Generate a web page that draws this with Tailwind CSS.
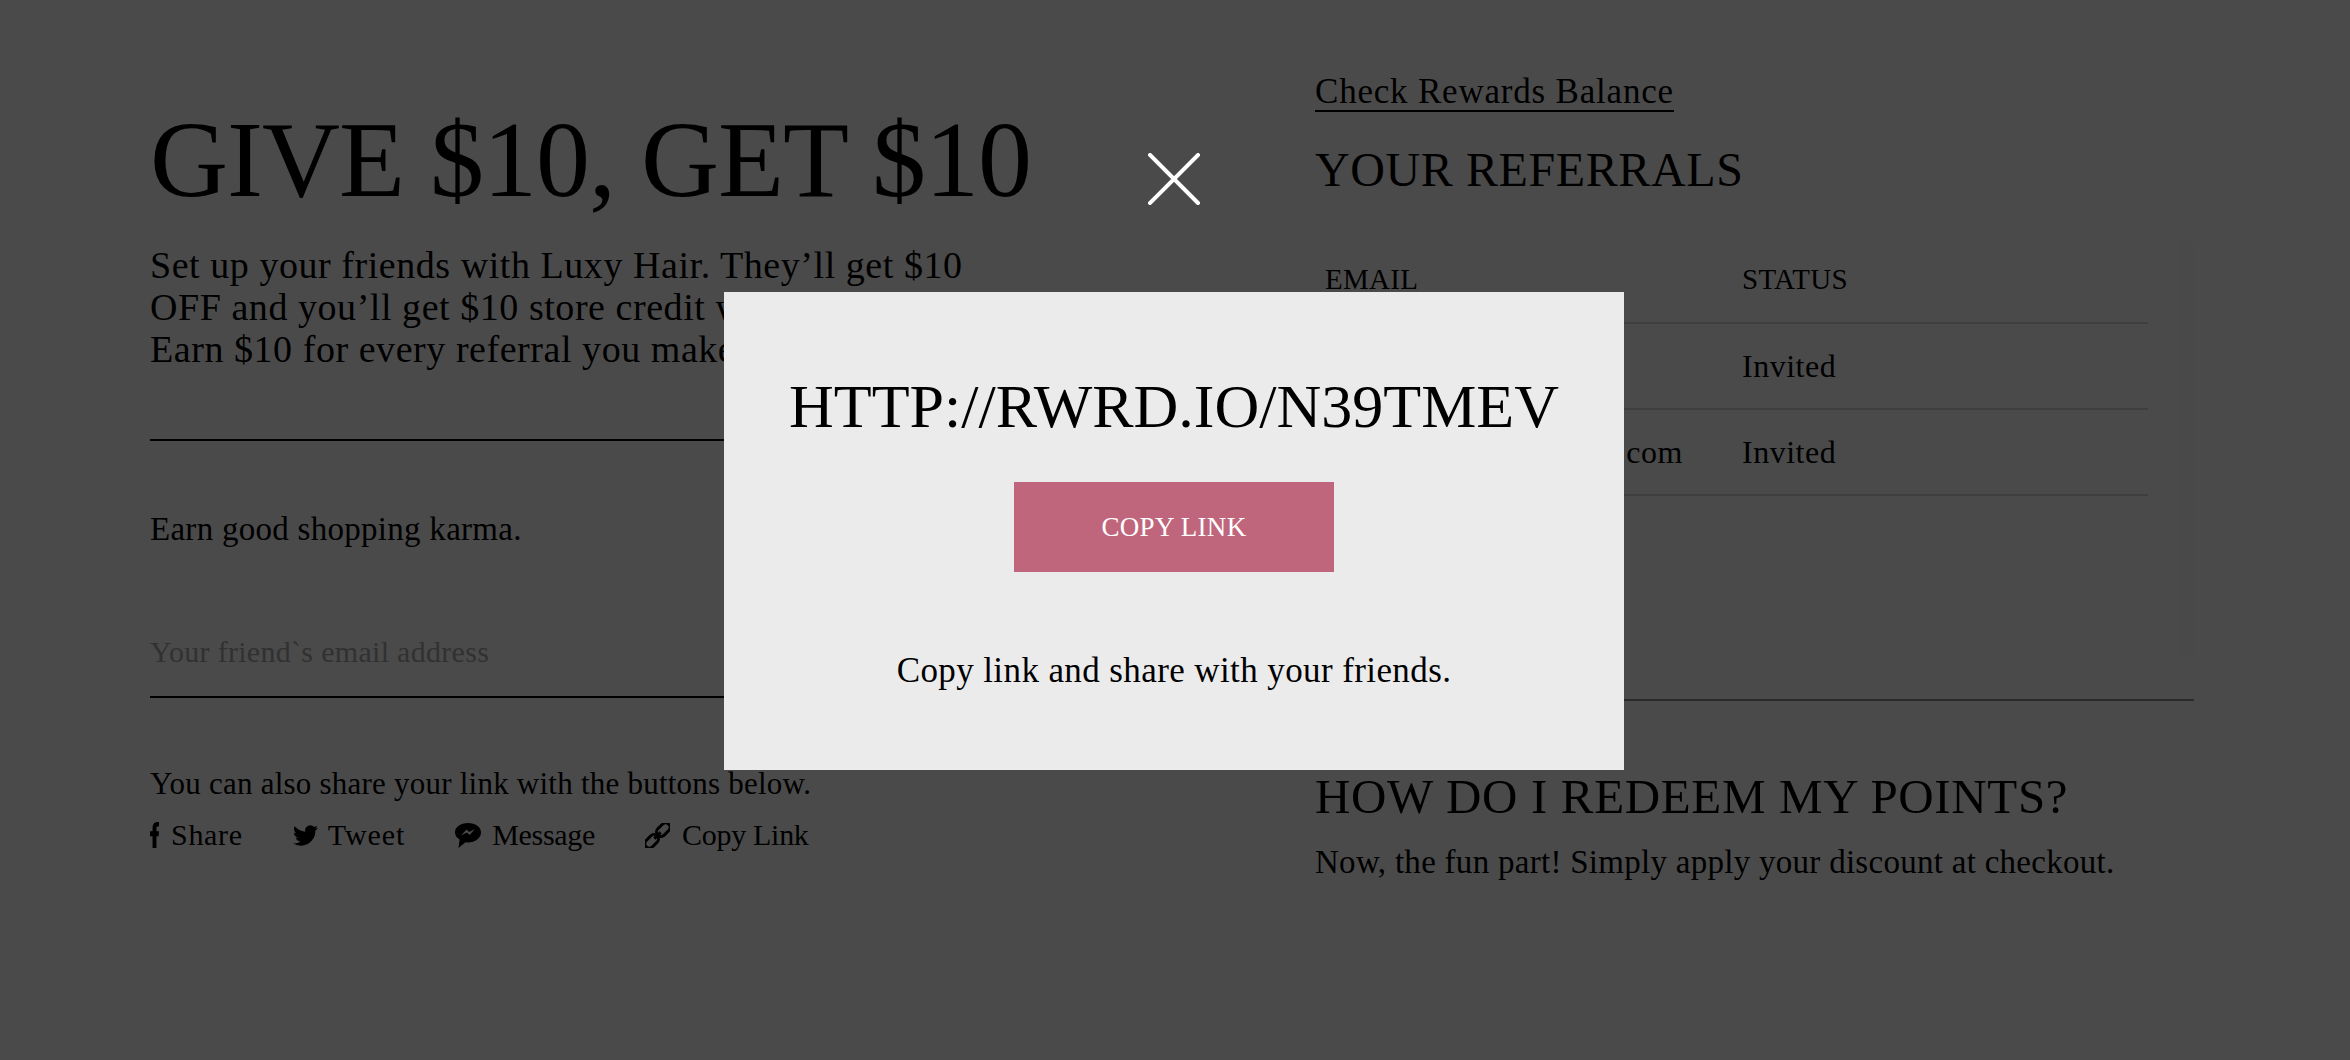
<!doctype html>
<html lang="en">
<head>
  <meta charset="UTF-8" />
  <title>Refer a friend</title>
  <script src="https://cdn.jsdelivr.net/npm/@tailwindcss/browser@4"></script>
</head>
<body class="bg-white text-black font-['Liberation_Serif',serif] overflow-hidden">
  <main class="flex h-[1060px] pl-[150px]">
    <section class="w-[1015px] shrink-0 pt-[100px]">
      <h1 class="text-[108px] leading-[120px] h-[120px] tracking-[-1px]">GIVE $10, GET $10</h1>
      <p class="mt-[24px] text-[38px] leading-[42px] tracking-[0.55px] w-[880px]">Set up your friends with Luxy Hair. They’ll get $10<br />OFF and you’ll get $10 store credit when they buy.<br />Earn $10 for every referral you make.</p>
      <hr class="mt-[69px] border-t-2 border-black" />
      <p class="mt-[70px] text-[33px] leading-[36px] tracking-[0.28px]">Earn good shopping karma.</p>
      <div class="mt-[83px] h-[68px] border-b-2 border-black">
        <input type="text" placeholder="Your friend`s email address" class="w-full text-[30px] leading-[44px] tracking-[0.3px] outline-none placeholder:text-[#aaaaaa]" />
      </div>
      <p class="mt-[68px] text-[31px] leading-[36px] tracking-[0.23px]">You can also share your link with the buttons below.</p>
      <div class="mt-[15px] flex items-center gap-[50px] text-[30px] leading-[36px]">
        <a class="flex items-center gap-[12px] tracking-[0.7px]">
          <svg class="w-[9px] h-[26px]" viewBox="0 0 8.500 25" preserveAspectRatio="none" fill="currentColor"><path d="M2.400 25V13.600H0V9h2.400V5.800C2.400 2 4.300 0 7 0c.6 0 1.200 0 1.500.1v4.200H7.400c-1 0-1.300.5-1.300 1.500V9h2.400l-.4 4.600H6.100V25z"/></svg>
          Share
        </a>
        <a class="flex items-center gap-[10px] tracking-[0.9px]">
          <svg class="w-[25px] h-[25px]" viewBox="0 0 24 24" fill="currentColor"><path d="M23.953 4.57a10 10 0 01-2.825.775 4.958 4.958 0 002.163-2.723c-.951.555-2.005.959-3.127 1.184a4.92 4.92 0 00-8.384 4.482C7.69 8.095 4.067 6.13 1.64 3.162a4.822 4.822 0 00-.666 2.475c0 1.71.87 3.213 2.188 4.096a4.904 4.904 0 01-2.228-.616v.06a4.923 4.923 0 003.946 4.827 4.996 4.996 0 01-2.212.085 4.936 4.936 0 004.604 3.417 9.867 9.867 0 01-6.102 2.105c-.39 0-.779-.023-1.17-.067a13.995 13.995 0 007.557 2.209c9.053 0 13.998-7.496 13.998-13.985 0-.21 0-.42-.015-.63A9.935 9.935 0 0024 4.59z"/></svg>
          Tweet
        </a>
        <a class="flex items-center gap-[11px] tracking-[-0.3px]">
          <svg class="w-[26px] h-[25px]" viewBox="0 0 26 25" fill="currentColor" fill-rule="evenodd"><path d="M13 0C5.800 0 0 4 0 9.300c0 3 1.800 5.600 4.600 7.300L3.500 25l7-5.800c.8.1 1.700.2 2.500.2 7.200 0 13-4.500 13-10S20.200 0 13 0zM6 12.500l5.500-6 2.700 2.600L20 6l-5.400 6-2.700-2.600z"/></svg>
          Message
        </a>
        <a class="flex items-center gap-[12px] tracking-[-0.3px]">
          <svg class="w-[25px] h-[25px]" viewBox="0 0 25 25" fill="none" stroke="currentColor" stroke-width="3"><g transform="rotate(-45 12.500 12.500)"><rect x="-3.500" y="8" width="15.500" height="9" rx="4.500"/><rect x="13" y="8" width="15.500" height="9" rx="4.500"/><path d="M8 12.500h9"/></g></svg>
          Copy Link
        </a>
      </div>
    </section>

    <section class="ml-[150px] w-[879px] shrink-0 pt-[73px]">
      <a class="inline-block text-[35px] leading-[37px] tracking-[0.8px] border-b-2 border-black">Check Rewards Balance</a>
      <h2 class="mt-[31px] text-[48px] leading-[54px] tracking-[0.6px]">YOUR REFERRALS</h2>
      <div class="mt-[41px] h-[461px] flex items-start bg-white">
        <table class="w-[833px] text-left border-collapse">
          <thead class="text-[29px] tracking-[0.3px]">
            <tr class="h-[85px] border-b-2 border-[#d9d9d9]"><th class="font-normal pl-[10px] w-[427px]">EMAIL</th><th class="font-normal">STATUS</th></tr>
          </thead>
          <tbody class="text-[32px] tracking-[0.5px]">
            <tr class="h-[86px] border-b-2 border-[#d9d9d9]"><td class="pl-[10px]">hello@luxyhair.com</td><td>Invited</td></tr>
            <tr class="h-[86px] border-b-2 border-[#d9d9d9]"><td class="pl-[10px]">friends.ofluxy@gmail.com</td><td>Invited</td></tr>
          </tbody>
        </table>
        <div class="ml-auto w-[16px] h-[419px] rounded-t-[8px] bg-[#fafafa]"></div>
      </div>
      <hr class="border-t-2 border-[#949494]" />
      <h2 class="mt-[69px] text-[49px] leading-[54px] tracking-[0.65px]">HOW DO I REDEEM MY POINTS?</h2>
      <p class="mt-[19px] text-[33px] leading-[38px] tracking-[0.28px]">Now, the fun part! Simply apply your discount at checkout.</p>
    </section>
  </main>

  <div class="fixed inset-0 bg-black/71"></div>

  <div class="fixed inset-0 flex items-center justify-center pt-[2px] pr-[2px]">
    <button class="absolute left-[1148px] top-[153px] w-[52px] h-[52px] text-white" title="Close">
      <svg viewBox="0 0 52 52" class="w-full h-full" stroke="currentColor" stroke-width="4" stroke-linecap="square"><path d="M2 2 50 50M50 2 2 50"/></svg>
    </button>
    <div class="w-[900px] h-[478px] bg-[#ebebeb] flex flex-col items-center pt-[78px] text-black">
      <h2 class="text-[62px] leading-[72px] tracking-[0px]">HTTP://RWRD.IO/N39TMEV</h2>
      <button class="mt-[40px] w-[320px] h-[90px] bg-[#c0667c] text-white text-[27px] tracking-[0.3px]">COPY LINK</button>
      <p class="mt-[78px] text-[35px] leading-[42px] tracking-[0.4px]">Copy link and share with your friends.</p>
    </div>
  </div>
</body>
</html>
